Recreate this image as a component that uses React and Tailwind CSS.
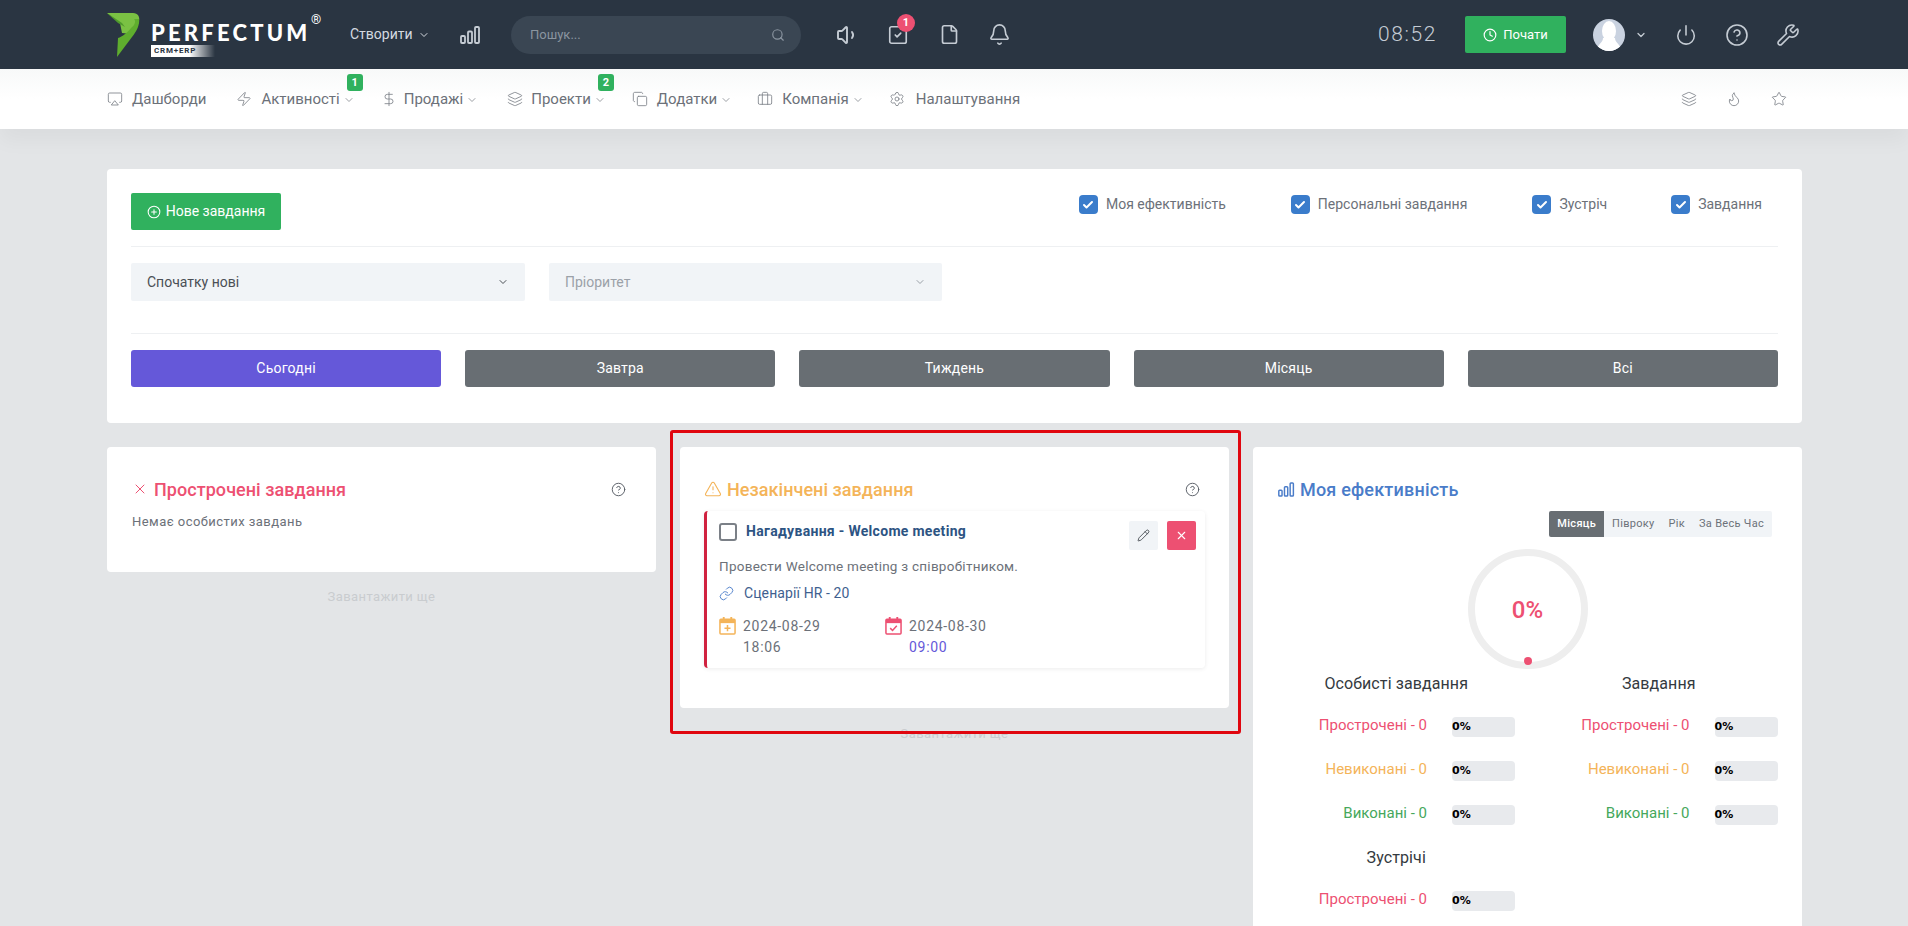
import React from "react"
import {
  Airplay, Bell, Briefcase, Check, ChevronDown, CircleHelp, CirclePlus, Clock,
  Copy, DollarSign, File, Flame, Layers, Link, Pencil, Power, Search, Settings, SquareCheck, Star,
  TriangleAlert, Volume1, Wrench, X, Zap,
} from "lucide-react"

function BarsIcon({ className }) {
  return (
    <svg viewBox="0 0 21 18" fill="none" stroke="currentColor" strokeWidth="1.8" className={className}>
      <rect x="1" y="10" width="4" height="7" rx="1" />
      <rect x="8" y="5.5" width="4" height="11.5" rx="1" />
      <rect x="15" y="1" width="4" height="16" rx="1" />
    </svg>
  )
}

function Logo() {
  return (
    <svg viewBox="0 0 33 44" className="w-[33px] h-[44px]">
      <path d="M0 0H26C31 0 33 4 32 8C31 13 28 17 25 21L15 20L13 10Z" fill="#7ac143" />
      <path d="M0 0L15 10L18 14L11 10Z" fill="#4f9a2c" />
      <path d="M25 14C28 12 29 8 27 6L32 6C33 11 30 18 25 24L10 44L11 25C15 24 21 19 25 14Z" fill="#5fae2e" />
    </svg>
  )
}

function Avatar() {
  return (
    <svg viewBox="0 0 32 32" className="w-8 h-8 rounded-full">
      <rect width="32" height="32" fill="#c9d2e0" />
      <ellipse cx="16" cy="12" rx="7" ry="10" fill="#fff" />
      <path d="M10 19C10 24 4 25 4 32H28C28 25 22 24 22 19Z" fill="#fff" />
    </svg>
  )
}

// calendar with a filled header band, the mark inside differs per date
function CalendarIcon({ className, children }) {
  return (
    <svg viewBox="0 0 18 20" fill="none" stroke="currentColor" strokeWidth="1.6" className={className}>
      <rect x="1" y="3.5" width="16" height="15.5" rx="1" />
      <path d="M1 4H17V7.5H1Z" fill="currentColor" stroke="none" />
      <path d="M5 1V4M13 1V4" strokeWidth="2" />
      {children}
    </svg>
  )
}

function NavItem({ icon: Icon, label, chevron, badge, className, textClass }) {
  return (
    <div className={`relative flex items-center ${className}`}>
      <Icon className="w-4 h-4 text-[#7b8087]" strokeWidth={1.25} />
      <span className={`text-[15px] text-[#6c7179] ${textClass}`}>{label}</span>
      {chevron && <ChevronDown className="w-3 h-3 ml-[3px] mt-[2px] text-[#7b8087]" strokeWidth={1.5} />}
      {badge && (
        <span className="absolute right-[-8px] top-[-14px] w-4 h-[17px] rounded-[3px] bg-[#30b15e] text-white text-[11px] font-bold leading-[17px] text-center">
          {badge}
        </span>
      )}
    </div>
  )
}

function Filter({ label, className }) {
  return (
    <label className={`flex items-center ${className}`}>
      <span className="flex items-center justify-center w-[19px] h-[19px] rounded-[4px] bg-[#3a7ccb]">
        <Check className="w-3 h-3 text-white" strokeWidth={4} />
      </span>
      <span className="ml-[8px] text-[14px] text-[#6c7179]">{label}</span>
    </label>
  )
}

function Period({ label, active }) {
  return (
    <button className={`h-[37px] rounded-[3px] text-white text-[14px] tracking-[0.2px] ${active ? "bg-[#6558d9]" : "bg-[#686e73]"}`}>
      {label}
    </button>
  )
}

function Stat({ label, color, className = "" }) {
  return (
    <div className={`flex items-center h-[44px] ${className}`}>
      <div className={`w-[162px] text-right text-[15px] leading-[20px] mb-[4px] ${color}`}>{label} - 0</div>
      <div className="ml-[25px] w-[63px] h-[20px] rounded-[4px] bg-[#e8eaed] text-[11px] font-bold leading-[20px] text-black font-['DejaVu_Sans',sans-serif]">
        0%
      </div>
    </div>
  )
}

function StatHeading({ children }) {
  return <div className="h-[24px] text-center text-[16px] leading-[24px] tracking-[0.1px] text-[#343a40] mb-[9px]">{children}</div>
}

export default function App() {
  return (
    <div className="h-[926px] overflow-hidden bg-[#e3e5e7] font-['Roboto',sans-serif]">
      {/* top bar */}
      <header className="flex items-center h-[69px] bg-[#2a3542] pl-[107px] text-[#c5ccd4]">
        <Logo />
        <div className="relative ml-[11px] w-[199px] h-[44px]">
          <div className="pt-[9px] text-[22px] leading-[22px] font-black tracking-[3.2px] text-white font-['Lato',sans-serif]">PERFECTUM</div>
          <div className="mt-[1px] flex items-center w-[64px] h-[12px] pl-[3px] text-[8px] font-bold tracking-[0.8px] text-[#2a3542] bg-gradient-to-r from-white from-60% to-transparent">
            CRM+ERP
          </div>
          <span className="absolute left-[160px] top-[-3px] text-[13px] text-white">®</span>
        </div>
        <div className="flex items-center w-[110px] text-[14px] text-[#d5dae0]">
          Створити
          <ChevronDown className="w-3 h-3 ml-[5px]" strokeWidth={2} />
        </div>
        <BarsIcon className="w-[21px] h-[18px] mr-[30px]" />
        <div className="flex items-center justify-between w-[290px] h-[38px] rounded-full bg-[#3a4653] pl-[19px] pr-[16px] text-[13px] text-[#8b95a0]">
          Пошук...
          <Search className="w-[14px] h-[14px]" strokeWidth={2} />
        </div>
        <Volume1 className="w-[24px] h-[24px] ml-[35px]" strokeWidth={1.9} />
        <div className="relative ml-[27px] mr-[30px]">
          <SquareCheck className="w-[22px] h-[22px]" strokeWidth={1.8} />
          <span className="absolute right-[-6px] top-[-10px] w-[18px] h-[18px] rounded-full bg-[#ed5072] text-white text-[11px] font-bold leading-[18px] text-center">1</span>
        </div>
        <File className="w-[21px] h-[21px]" strokeWidth={1.9} />
        <Bell className="w-[23px] h-[23px] ml-[28px]" strokeWidth={1.7} />
        <div className="ml-[367px] w-[87px] text-[21px] tracking-[1.6px] font-light text-[#c5ccd4]">08:52</div>
        <button className="flex items-center justify-center w-[101px] h-[37px] rounded-[2px] bg-[#30b15e] text-white text-[13px]">
          <Clock className="w-[14px] h-[14px] mr-[6px]" strokeWidth={2} />
          Почати
        </button>
        <div className="ml-[27px]"><Avatar /></div>
        <ChevronDown className="w-3 h-3 ml-[10px]" strokeWidth={2.5} />
        <Power className="w-[22px] h-[22px] ml-[28px]" strokeWidth={1.7} />
        <CircleHelp className="w-[24px] h-[24px] ml-[28px]" strokeWidth={1.6} />
        <Wrench className="w-[24px] h-[24px] ml-[27px]" strokeWidth={1.6} />
      </header>

      {/* nav */}
      <nav className="relative flex items-center h-[60px] pl-[107px] bg-gradient-to-b from-[#f8f9f9] to-white to-50% shadow-[0_12px_20px_rgba(0,0,0,0.04)]">
        <NavItem icon={Airplay} label="Дашборди" textClass="ml-[9px]" />
        <NavItem icon={Zap} label="Активності" chevron badge="1" textClass="ml-[9px]" className="ml-[30px]" />
        <NavItem icon={DollarSign} label="Продажі" chevron textClass="ml-[7px]" className="ml-[26px]" />
        <NavItem icon={Layers} label="Проекти" chevron badge="2" textClass="ml-[8px]" className="ml-[29px]" />
        <NavItem icon={Copy} label="Додатки" chevron textClass="ml-[9px]" className="ml-[26px]" />
        <NavItem icon={Briefcase} label="Компанія" chevron textClass="ml-[9px]" className="ml-[25px]" />
        <NavItem icon={Settings} label="Налаштування" textClass="ml-[11px]" className="ml-[25px]" />
        <div className="ml-auto mr-[121px] flex items-center gap-[29px] text-[#7b8087]">
          <Layers className="w-4 h-4" strokeWidth={1.25} />
          <Flame className="w-4 h-4" strokeWidth={1.25} />
          <Star className="w-4 h-4" strokeWidth={1.25} />
        </div>
      </nav>

      <main className="pl-[107px] pr-[106px] pt-[40px]">
        {/* filter card */}
        <section className="h-[254px] rounded-[4px] bg-white px-[24px] pt-[24px]">
          <div className="flex items-start h-[54px] border-b border-[#eef0f2]">
            <button className="flex items-center justify-center w-[150px] h-[37px] rounded-[2px] bg-[#30b15e] text-white text-[14px]">
              <CirclePlus className="w-[14px] h-[14px] mr-[5px]" strokeWidth={1.8} />
              Нове завдання
            </button>
            <div className="ml-auto flex pr-[16px] pt-[1px]">
              <Filter label="Моя ефективність" />
              <Filter label="Персональні завдання" className="ml-[65px]" />
              <Filter label="Зустріч" className="ml-[65px]" />
              <Filter label="Завдання" className="ml-[64px]" />
            </div>
          </div>
          <div className="flex gap-[24px] h-[87px] pt-[16px] border-b border-[#eef0f2]">
            <div className="flex items-center justify-between w-[394px] h-[38px] rounded-[2px] bg-[#f1f4f7] px-[16px] text-[14px] text-[#4a4f55]">
              Спочатку нові
              <ChevronDown className="w-3 h-3" strokeWidth={2} />
            </div>
            <div className="flex items-center justify-between w-[393px] h-[38px] rounded-[2px] bg-[#f1f4f7] px-[16px] text-[14px] text-[#9ba1a8]">
              Пріоритет
              <ChevronDown className="w-3 h-3" strokeWidth={2} />
            </div>
          </div>
          <div className="grid grid-cols-5 gap-[24px] pt-[16px]">
            <Period label="Сьогодні" active />
            <Period label="Завтра" />
            <Period label="Тиждень" />
            <Period label="Місяць" />
            <Period label="Всі" />
          </div>
        </section>

        <div className="grid grid-cols-3 gap-[24px] mt-[24px] items-start">
          {/* overdue */}
          <div>
            <section className="h-[125px] rounded-[4px] bg-white px-[25px] pt-[30px]">
              <div className="flex items-center justify-between h-[24px] pr-[5px]">
                <h3 className="flex items-center text-[18px] font-medium tracking-[0.05px] text-[#ed5072]">
                  <X className="w-[16px] h-[16px] mr-[6px]" strokeWidth={1.5} />
                  Прострочені завдання
                </h3>
                <CircleHelp className="w-[15px] h-[15px] text-[#555b63]" strokeWidth={1.5} />
              </div>
              <p className="mt-[11px] text-[13px] tracking-[0.45px] text-[#6c7179]">Немає особистих завдань</p>
            </section>
            <p className="mt-[15px] text-center text-[13px] tracking-[0.4px] text-[#c9cccf]">Завантажити ще</p>
          </div>

          {/* incomplete */}
          <div>
            <section className="relative h-[261px] rounded-[4px] bg-white px-[24px] pt-[30px]">
              <div className="flex items-center justify-between h-[24px] pr-[5px]">
                <h3 className="flex items-center text-[18px] font-medium tracking-[0.05px] text-[#f4b459]">
                  <TriangleAlert className="w-[18px] h-[18px] mr-[5px]" strokeWidth={1.5} />
                  Незакінчені завдання
                </h3>
                <CircleHelp className="w-[15px] h-[15px] text-[#555b63]" strokeWidth={1.5} />
              </div>
              <div className="mt-[10px] h-[157px] rounded-[4px] border-l-[3px] border-[#d0213f] pl-[12px] pr-[9px] pt-[10px] shadow-[0_1px_4px_rgba(0,0,0,0.08)]">
                <div className="flex items-start">
                  <span className="mt-[2px] w-[18px] h-[18px] rounded-[3px] border-2 border-[#7b8087]" />
                  <span className="ml-[9px] text-[14px] font-bold tracking-[0.3px] text-[#2d5483]">Нагадування - Welcome meeting</span>
                  <span className="ml-auto flex items-center justify-center w-[29px] h-[29px] rounded-[2px] bg-[#f1f4f7]">
                    <Pencil className="w-[13px] h-[13px] text-[#343a40]" strokeWidth={1.5} />
                  </span>
                  <span className="ml-[9px] flex items-center justify-center w-[29px] h-[29px] rounded-[2px] bg-[#ed5072]">
                    <X className="w-[13px] h-[13px] text-white" strokeWidth={2} />
                  </span>
                </div>
                <p className="mt-[6px] text-[13.5px] leading-[20px] tracking-[0.25px] text-[#6c7179]">Провести Welcome meeting з співробітником.</p>
                <div className="flex items-center mt-[7px] text-[14px] leading-[20px] tracking-[0.1px] text-[#3f5f8f]">
                  <Link className="w-[15px] h-[15px] mr-[10px] text-[#4a7cc9]" strokeWidth={1.5} />
                  Сценарії HR - 20
                </div>
                <div className="flex mt-[13px] text-[14px] leading-[21px] tracking-[0.7px] text-[#6c7179]">
                  <CalendarIcon className="w-[17px] h-[19px] text-[#f4b459]">
                    <path d="M9 9.5V16M5.8 12.8H12.2" />
                  </CalendarIcon>
                  <div className="ml-[7px] w-[142px]">
                    2024-08-29
                    <br />
                    18:06
                  </div>
                  <CalendarIcon className="w-[17px] h-[19px] text-[#ed5072]">
                    <path d="M5.5 12.8L8 15.3L12.5 10.3" />
                  </CalendarIcon>
                  <div className="ml-[7px]">
                    2024-08-30
                    <br />
                    <span className="text-[#6558d9]">09:00</span>
                  </div>
                </div>
              </div>
              {/* red highlight frame */}
              <div className="absolute top-[-17px] bottom-[-26px] left-[-10px] right-[-12px] rounded-[3px] border-[3px] border-[#e0060f] pointer-events-none" />
            </section>
            <p className="mt-[16px] text-center text-[13px] tracking-[0.4px] text-[#c9cccf]">Завантажити ще</p>
          </div>

          {/* my efficiency */}
          <section className="h-[520px] rounded-[4px] bg-white px-[25px] pt-[30px]">
            <h3 className="flex items-center h-[24px] text-[18px] font-medium tracking-[0.2px] text-[#4a7cc9]">
              <BarsIcon className="w-[17px] h-[15px] mr-[5px]" />
              Моя ефективність
            </h3>
            <div className="flex justify-end mt-[10px] mr-[5px]">
              <div className="flex items-center h-[26px] rounded-[2px] bg-[#f1f4f7] text-[11px] tracking-[0.3px] text-[#6c7179]">
                <span className="flex items-center h-full px-[8px] rounded-l-[2px] bg-[#686e73] text-white font-medium">Місяць</span>
                <span className="ml-[8px]">Півроку</span>
                <span className="ml-[14px]">Рік</span>
                <span className="ml-[14px] mr-[8px]">За Весь Час</span>
              </div>
            </div>
            <div className="relative flex items-center justify-center w-[120px] h-[120px] mx-auto mt-[12px] pt-[2px] rounded-full border-[7px] border-[#eeeeee] text-[24px] font-medium text-[#ed5072]">
              0%
              <span className="absolute bottom-[-3px] left-[49px] w-2 h-2 rounded-full bg-[#ed5072]" />
            </div>
            <div className="grid grid-cols-2 -mx-[13px] mt-[3px]">
              <div>
                <StatHeading>Особисті завдання</StatHeading>
                <Stat label="Прострочені" color="text-[#ed5072]" />
                <Stat label="Невиконані" color="text-[#f4b459]" />
                <Stat label="Виконані" color="text-[#46a85c]" />
                <div className="mt-[9px]"><StatHeading>Зустрічі</StatHeading></div>
                <Stat label="Прострочені" color="text-[#ed5072]" />
              </div>
              <div>
                <StatHeading>Завдання</StatHeading>
                <Stat label="Прострочені" color="text-[#ed5072]" />
                <Stat label="Невиконані" color="text-[#f4b459]" />
                <Stat label="Виконані" color="text-[#46a85c]" />
              </div>
            </div>
          </section>
        </div>
      </main>
    </div>
  )
}
